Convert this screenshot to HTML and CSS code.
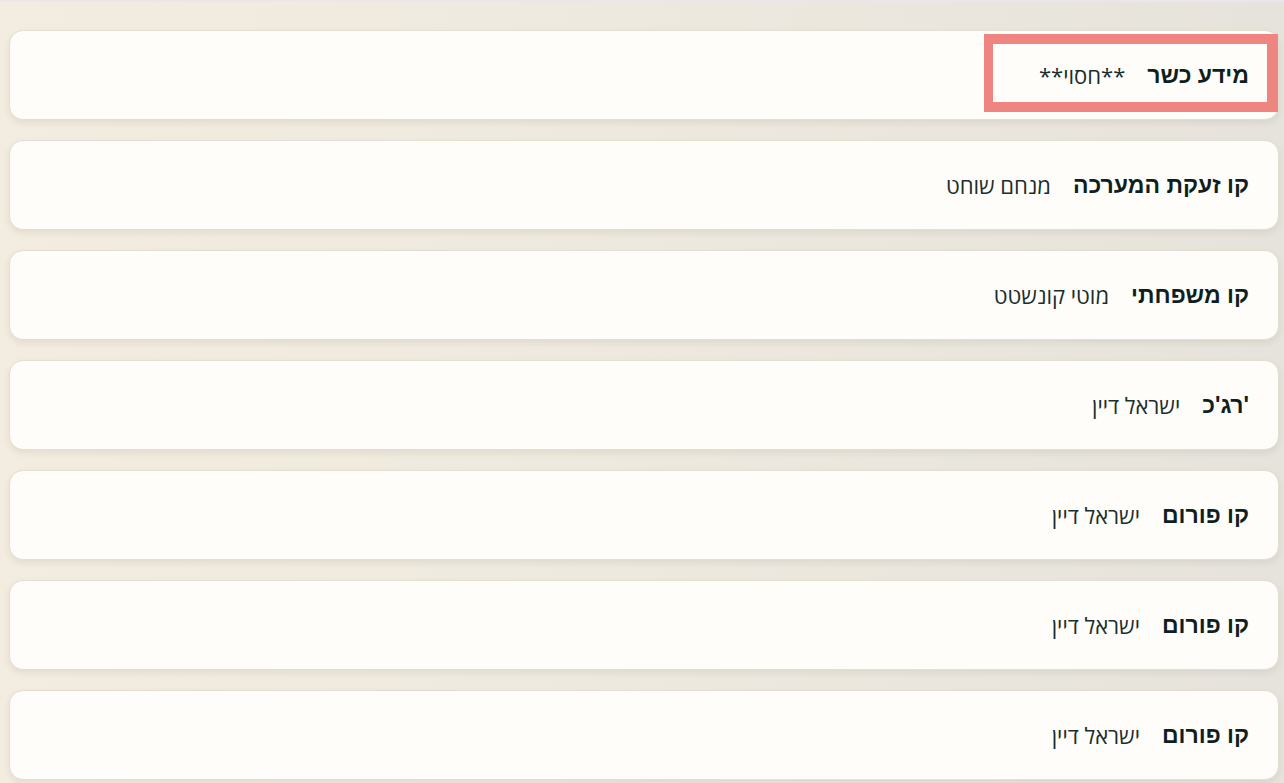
FILE: index.html
```html
<!DOCTYPE html>
<html lang="he" dir="rtl">
<head>
	<meta charset="utf-8">
	<title>קווים</title>
	<link rel="stylesheet" href="styles.css">
</head>
<body>
	<div class="list">
		<div class="line selected">
			<span class="name">מידע כשר</span>
			<span class="owner">**חסוי**</span>
			<div class="mark"></div>
		</div>
		<div class="line">
			<span class="name">קו זעקת המערכה</span>
			<span class="owner">מנחם שוחט</span>
		</div>
		<div class="line">
			<span class="name">קו משפחתי</span>
			<span class="owner">מוטי קונשטט</span>
		</div>
		<div class="line">
			<span class="name">'רג'כ</span>
			<span class="owner">ישראל דיין</span>
		</div>
		<div class="line">
			<span class="name">קו פורום</span>
			<span class="owner">ישראל דיין</span>
		</div>
		<div class="line">
			<span class="name">קו פורום</span>
			<span class="owner">ישראל דיין</span>
		</div>
		<div class="line">
			<span class="name">קו פורום</span>
			<span class="owner">ישראל דיין</span>
		</div>
	</div>
</body>
</html>
```

FILE: styles.css
```css
html{
	height: 100%;
}
body{
	margin: 0;
	min-height: 100%;
	border-top: 2px solid #efe4ec;
	box-sizing: border-box;
	font-family: 'Liberation Sans', 'DejaVu Sans', sans-serif;
	background: linear-gradient(to right, #f3ece0 0%, #efeadf 40%, #e6e3dc 100%);
}
.list{
	display: flex;
	flex-direction: column;
	gap: 20px;
	padding: 28px 5px 0 9px;
}
.line{
	position: relative;
	display: flex;
	align-items: center;
	gap: 22px;
	height: 88px;
	padding: 0 29px;
	background: #fffdf9;
	border: 1px solid #e4ded3;
	border-radius: 14px;
	box-shadow: 0 3px 6px rgba(120, 105, 80, .12);
}
.name{
	font-size: 23px;
	font-weight: bold;
	color: #0e1f1f;
}
.owner{
	font-family: 'Open Sans', 'Noto Sans', 'DejaVu Sans', sans-serif;
	font-size: 22px;
	color: #1a2e2e;
}
.mark{
	position: absolute;
	top: 3px;
	right: 0;
	width: 274px;
	height: 58px;
	border: 10px solid #ef8581;
	border-right-width: 11px;
	border-left-width: 9px;
}
```
